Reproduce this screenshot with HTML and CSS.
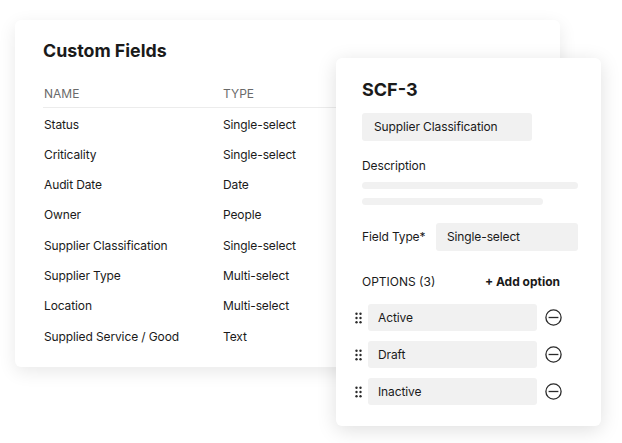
FILE: index.html
```html
<!DOCTYPE html>
<html lang="en">
<head>
  <meta charset="UTF-8">
  <meta name="viewport" content="width=device-width, initial-scale=1.0">
  <title>Custom Fields</title>
  <link rel="stylesheet" href="styles.css">
</head>
<body>
  <div class="stage">
    <div class="card list-card">
      <h1>Custom Fields</h1>
      <table class="fields">
        <thead>
          <tr><th>Name</th><th>Type</th></tr>
        </thead>
        <tbody>
          <tr><td>Status</td><td>Single-select</td></tr>
          <tr><td>Criticality</td><td>Single-select</td></tr>
          <tr><td>Audit Date</td><td>Date</td></tr>
          <tr><td>Owner</td><td>People</td></tr>
          <tr><td>Supplier Classification</td><td>Single-select</td></tr>
          <tr><td>Supplier Type</td><td>Multi-select</td></tr>
          <tr><td>Location</td><td>Multi-select</td></tr>
          <tr><td>Supplied Service / Good</td><td>Text</td></tr>
        </tbody>
      </table>
    </div>

    <div class="card detail-card">
      <h2>SCF-3</h2>
      <div class="field name-field">Supplier Classification</div>
      <p class="label">Description</p>
      <div class="bar bar-long"></div>
      <div class="bar bar-short"></div>
      <div class="type-row">
        <span class="label type-label">Field Type*</span>
        <div class="field type-field">Single-select</div>
      </div>
      <div class="options-head">
        <span>OPTIONS (3)</span>
        <span class="add">+ Add option</span>
      </div>
      <div class="options">
        <div class="option">
          <svg class="handle" width="8" height="12" viewBox="0 0 8 12"><circle cx="1.5" cy="1.7" r="1.2"/><circle cx="5.5" cy="1.7" r="1.2"/><circle cx="1.5" cy="6" r="1.2"/><circle cx="5.5" cy="6" r="1.2"/><circle cx="1.5" cy="10.3" r="1.2"/><circle cx="5.5" cy="10.3" r="1.2"/></svg>
          <div class="field option-field">Active</div>
          <svg class="remove" width="17" height="17" viewBox="0 0 17 17"><circle cx="8.5" cy="8.5" r="7.6"/><path d="M3.6 8.5h9.8"/></svg>
        </div>
        <div class="option">
          <svg class="handle" width="8" height="12" viewBox="0 0 8 12"><circle cx="1.5" cy="1.7" r="1.2"/><circle cx="5.5" cy="1.7" r="1.2"/><circle cx="1.5" cy="6" r="1.2"/><circle cx="5.5" cy="6" r="1.2"/><circle cx="1.5" cy="10.3" r="1.2"/><circle cx="5.5" cy="10.3" r="1.2"/></svg>
          <div class="field option-field">Draft</div>
          <svg class="remove" width="17" height="17" viewBox="0 0 17 17"><circle cx="8.5" cy="8.5" r="7.6"/><path d="M3.6 8.5h9.8"/></svg>
        </div>
        <div class="option">
          <svg class="handle" width="8" height="12" viewBox="0 0 8 12"><circle cx="1.5" cy="1.7" r="1.2"/><circle cx="5.5" cy="1.7" r="1.2"/><circle cx="1.5" cy="6" r="1.2"/><circle cx="5.5" cy="6" r="1.2"/><circle cx="1.5" cy="10.3" r="1.2"/><circle cx="5.5" cy="10.3" r="1.2"/></svg>
          <div class="field option-field">Inactive</div>
          <svg class="remove" width="17" height="17" viewBox="0 0 17 17"><circle cx="8.5" cy="8.5" r="7.6"/><path d="M3.6 8.5h9.8"/></svg>
        </div>
      </div>
    </div>
  </div>
</body>
</html>
```

FILE: styles.css
```css
body {
  margin: 0;
  background: #fff;
  font-family: Inter, "Noto Sans", sans-serif;
  color: #1a1a1a;
}
.stage {
  position: relative;
  width: 622px;
  height: 443px;
  padding: 20px 0 0 15px;
  box-sizing: border-box;
}
.card {
  background: #fff;
  border-radius: 6px;
  box-sizing: border-box;
}
.list-card {
  width: 545px;
  height: 347px;
  padding: 20px 28px 0 28px;
  box-shadow: 0 5px 18px rgba(0, 0, 0, 0.09);
}
h1 {
  margin: 0;
  font-size: 17.8px;
  line-height: 22px;
  font-weight: 700;
}
.fields {
  margin-top: 22px;
  width: 100%;
  border-collapse: collapse;
}
.fields th {
  text-align: left;
  font-weight: 400;
  font-size: 12px;
  line-height: 18px;
  text-transform: uppercase;
  color: #6a6a6a;
  padding: 1px 0 3.5px 1px;
  border-bottom: 1px solid #ececec;
}
.fields th:first-child,
.fields td:first-child {
  width: 178px;
}
.fields td {
  font-size: 12px;
  letter-spacing: -0.12px;
  height: 30.3px;
  line-height: 27.3px;
  padding: 3px 0 0 1px;
  box-sizing: border-box;
}
.detail-card {
  position: absolute;
  left: 336px;
  top: 58px;
  width: 265px;
  height: 368px;
  padding: 20.5px 23px 0 26px;
  box-shadow: 0 4px 20px rgba(0, 0, 0, 0.13);
}
h2 {
  margin: 0;
  font-size: 18px;
  line-height: 22px;
  font-weight: 700;
}
.field {
  background: #f1f1f1;
  border-radius: 3px;
  font-size: 12px;
  letter-spacing: -0.12px;
  box-sizing: border-box;
}
.name-field {
  margin-top: 12.5px;
  width: 170px;
  height: 28px;
  line-height: 28px;
  padding-left: 12px;
}
.label {
  margin: 0;
  font-size: 12px;
  letter-spacing: -0.12px;
  line-height: 18px;
}
.detail-card > .label {
  margin-top: 15.5px;
}
.bar {
  height: 7px;
  border-radius: 4px;
  background: #f1f1f1;
}
.bar-long {
  margin-top: 7.5px;
  width: 216px;
}
.bar-short {
  margin-top: 8.5px;
  width: 181px;
}
.type-row {
  display: flex;
  align-items: center;
  margin-top: 18.5px;
}
.type-label {
  width: 74px;
}
.type-field {
  width: 142px;
  height: 28px;
  line-height: 28px;
  padding-left: 11px;
}
.options-head {
  display: flex;
  justify-content: space-between;
  width: 198px;
  margin-top: 22px;
  font-size: 12px;
  line-height: 18px;
}
.add {
  font-weight: 700;
}
.options {
  display: flex;
  flex-direction: column;
  gap: 10px;
  margin: 13px 0 0 -7px;
}
.option {
  display: flex;
  align-items: center;
  height: 27px;
}
.handle {
  fill: #2a2a2a;
  margin-right: 5px;
}
.option-field {
  width: 169px;
  height: 27px;
  line-height: 27px;
  padding-left: 10px;
}
.remove {
  fill: none;
  stroke: #2a2a2a;
  stroke-width: 1.3;
  margin-left: 7.5px;
}
```
